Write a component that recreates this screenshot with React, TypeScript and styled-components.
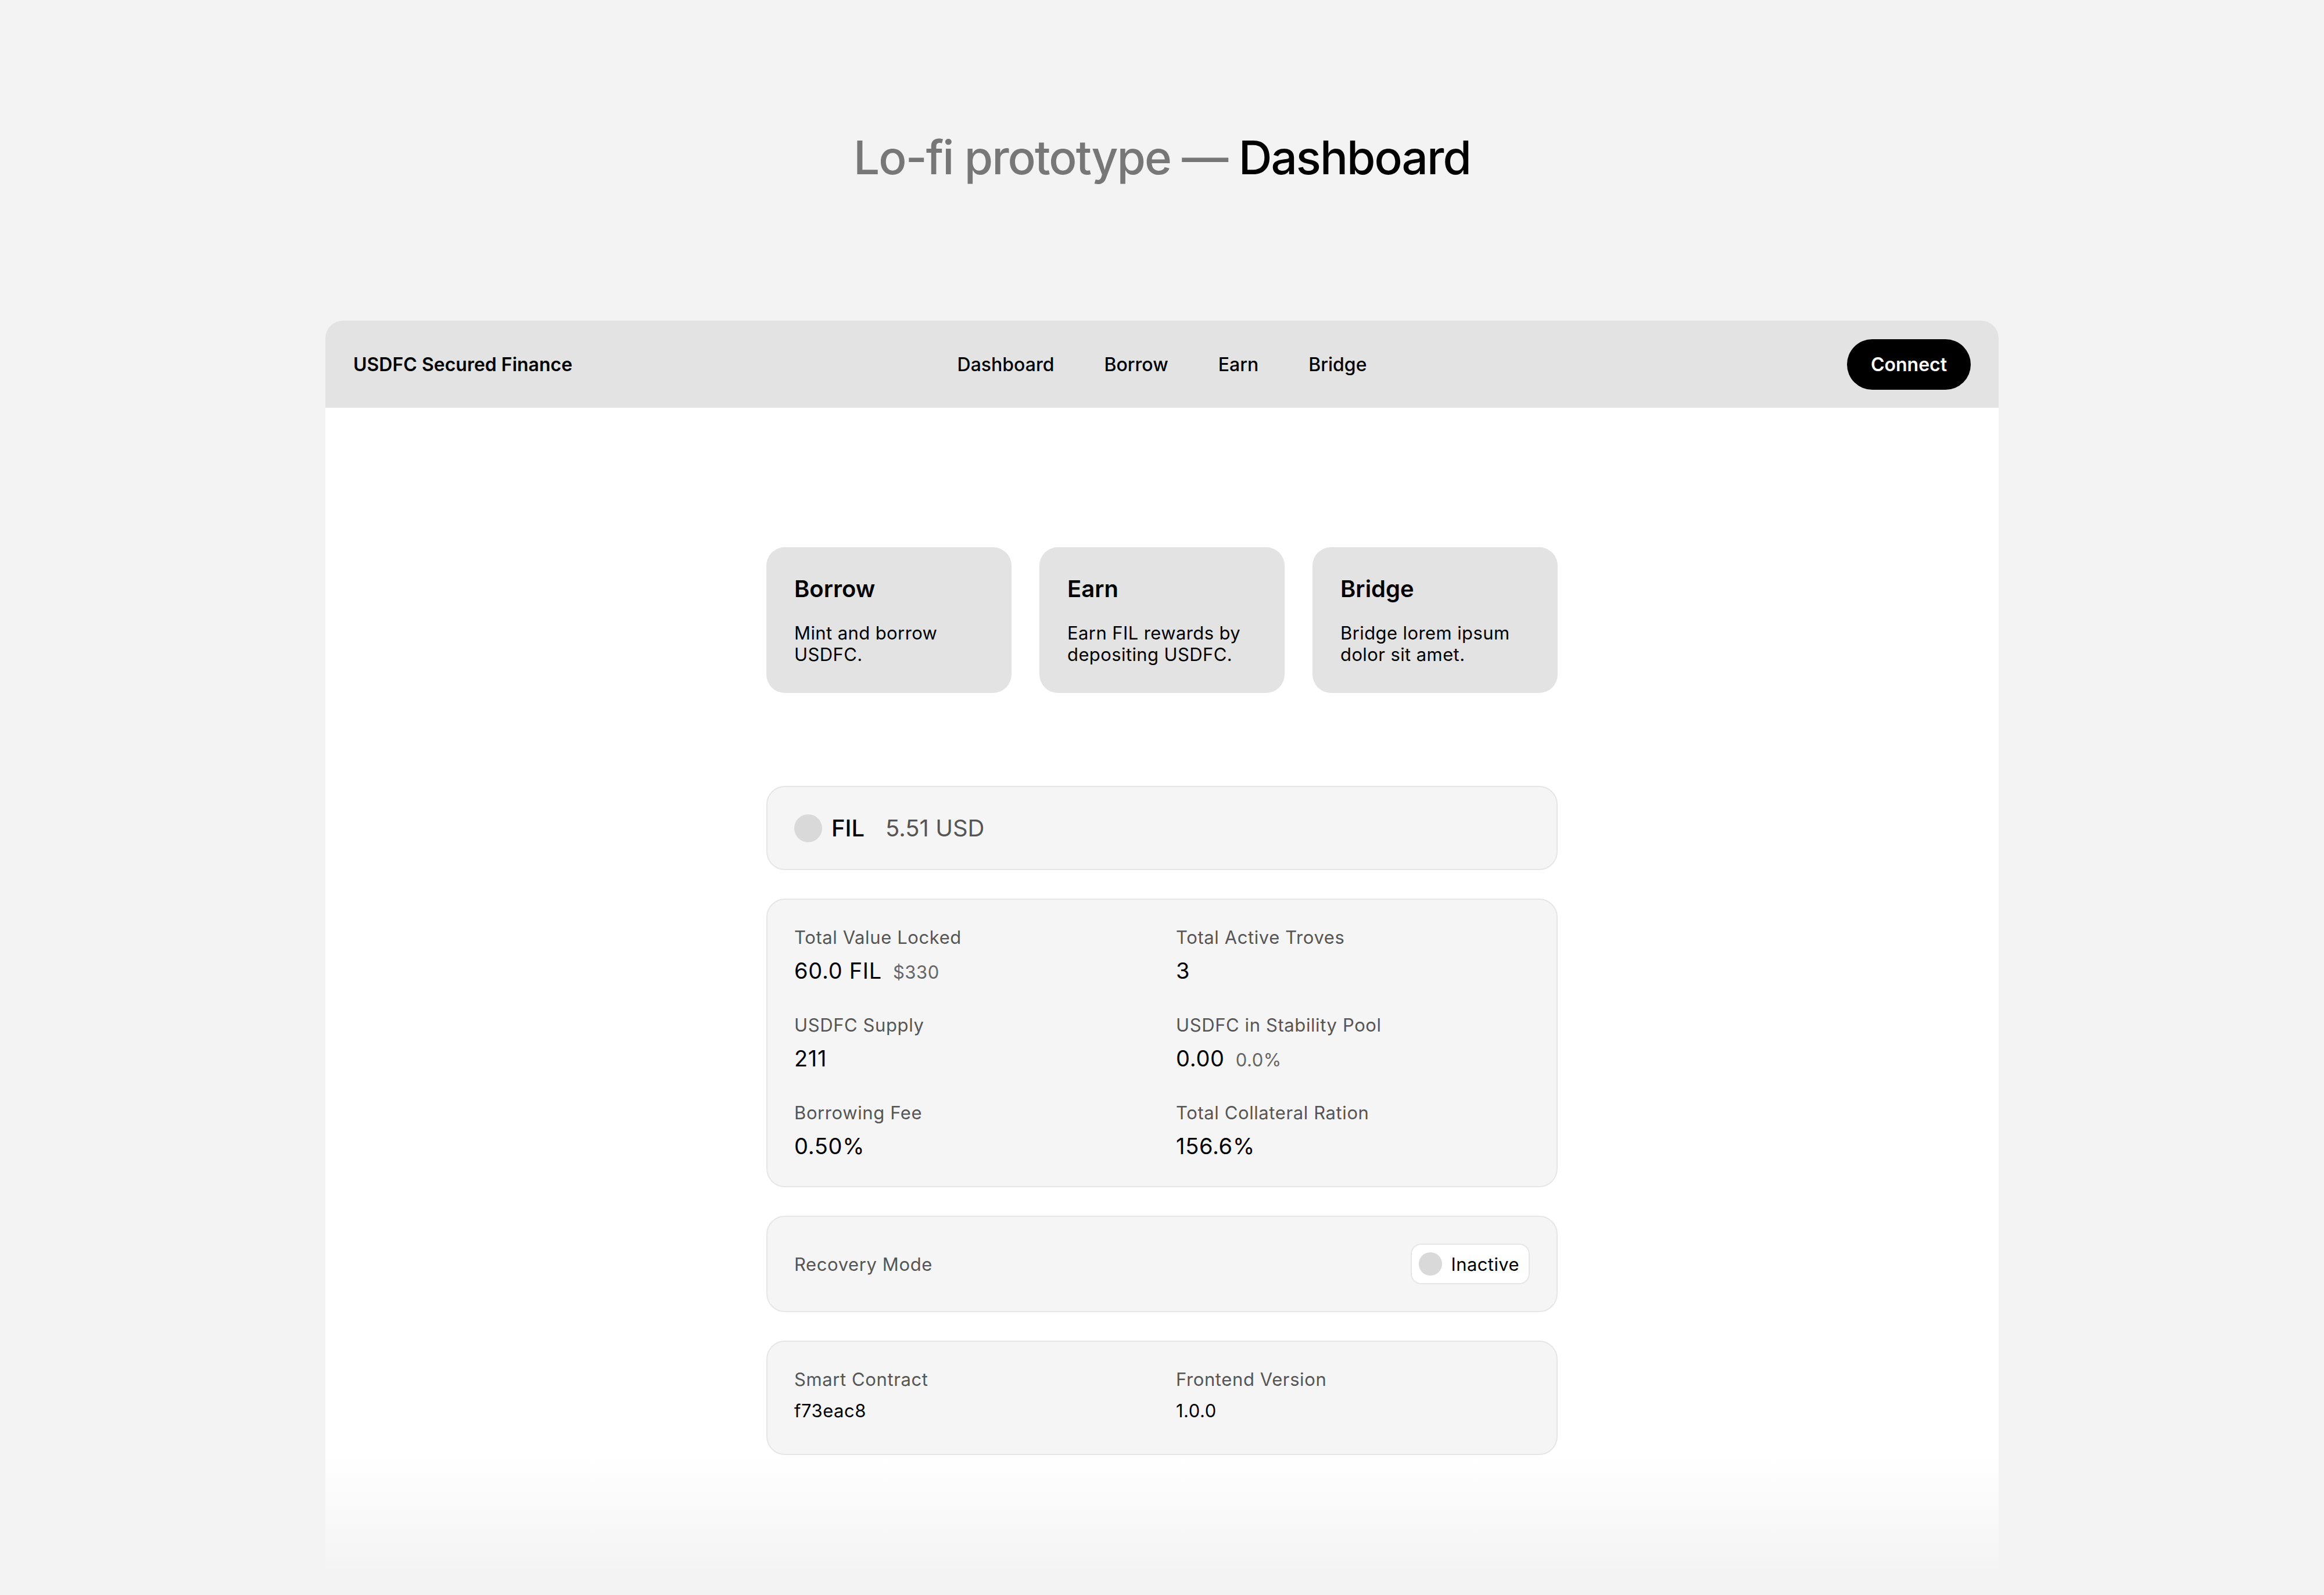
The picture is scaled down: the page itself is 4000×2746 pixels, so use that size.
import styled, { createGlobalStyle } from "styled-components"

const GlobalStyle = createGlobalStyle`
  html, body {
    margin: 0;
    padding: 0;
    background: #f3f3f3;
  }
  body {
    font-family: Inter, "Noto Sans", "Liberation Sans", sans-serif;
    color: #000;
    -webkit-font-smoothing: antialiased;
  }
`

const Page = styled.div`
  display: flex;
  flex-direction: column;
  align-items: center;
  padding-top: 223px;
  padding-bottom: 43px;
`

const Title = styled.h1`
  margin: 0;
  font-size: 80px;
  line-height: 96px;
  font-weight: 500;
  letter-spacing: -2px;
  color: #000;

  span {
    color: #777;
  }
`

const Frame = styled.div`
  margin-top: 233px;
  width: 2880px;
  border-radius: 30px 30px 0 0;
  overflow: hidden;
  background: #fff;
`

const Header = styled.header`
  height: 150px;
  padding: 0 48px;
  background: #e3e3e3;
  display: grid;
  grid-template-columns: 1fr auto 1fr;
  align-items: center;
`

const Brand = styled.div`
  font-size: 32px;
  font-weight: 600;
`

const Nav = styled.nav`
  display: flex;
  gap: 86px;
`

const NavLink = styled.a`
  font-size: 32px;
  font-weight: 500;
  color: #000;
  text-decoration: none;
  cursor: pointer;
`

const ConnectButton = styled.button`
  justify-self: end;
  height: 87px;
  width: 213px;
  border: none;
  border-radius: 44px;
  background: #000;
  color: #fff;
  font-family: inherit;
  font-size: 32px;
  font-weight: 600;
  cursor: pointer;
`

const Body = styled.main`
  padding: 240px 0 196px;
  display: flex;
  justify-content: center;
  background: linear-gradient(180deg, #fff 0, #fff calc(100% - 193px), #f4f4f4 100%);
`

const Column = styled.div`
  width: 1362px;
  display: flex;
  flex-direction: column;
  gap: 49px;
`

const ActionRow = styled.div`
  display: grid;
  grid-template-columns: repeat(3, 1fr);
  gap: 48px;
  margin-bottom: 111px;
`

const ActionCard = styled.div`
  background: #e3e3e3;
  border-radius: 32px;
  padding: 48px;
  display: flex;
  flex-direction: column;
  gap: 33px;
  cursor: pointer;
`

const ActionTitle = styled.div`
  font-size: 40px;
  line-height: 48px;
  font-weight: 600;
`

const ActionText = styled.div`
  font-size: 31px;
  line-height: 37px;
  font-weight: 400;
  letter-spacing: 0.4px;
`

const Panel = styled.section<{ $bottom?: number }>`
  background: #f5f5f5;
  border: 2px solid #e6e6e6;
  border-radius: 32px;
  padding: 46px 46px ${p => p.$bottom ?? 46}px;
`

const PriceRow = styled.div`
  display: flex;
  align-items: center;
`

const Dot = styled.span<{ $size: number }>`
  width: ${p => p.$size}px;
  height: ${p => p.$size}px;
  border-radius: 50%;
  background: #d9d9d9;
  flex-shrink: 0;
`

const Token = styled.span`
  margin-left: 16px;
  font-size: 40px;
  font-weight: 500;
`

const Price = styled.span`
  margin-left: 36px;
  font-size: 40px;
  font-weight: 400;
  color: #555;
`

const StatGrid = styled.div`
  display: grid;
  grid-template-columns: 1fr 1fr;
  column-gap: 48px;
  row-gap: 52px;
`

const Stat = styled.div`
  display: flex;
  flex-direction: column;
  gap: 16px;
`

const Label = styled.div`
  font-size: 31px;
  line-height: 37px;
  font-weight: 400;
  letter-spacing: 0.6px;
  color: #555;
`

const Value = styled.div`
  font-size: 38px;
  line-height: 46px;
  font-weight: 400;
  letter-spacing: 0.7px;
`

const SubValue = styled.span`
  margin-left: 19px;
  font-size: 31px;
  line-height: 1;
  font-weight: 400;
  letter-spacing: 0.5px;
  color: #666;
`

const ModeRow = styled.div`
  display: flex;
  align-items: center;
  justify-content: space-between;
`

const Badge = styled.div`
  display: flex;
  align-items: center;
  gap: 16px;
  padding: 13px 16px 13px 12px;
  background: #fff;
  border: 2px solid #e6e6e6;
  border-radius: 18px;
  font-size: 31px;
  line-height: 37px;
  font-weight: 400;
  letter-spacing: 0.4px;
`

const MetaGrid = styled.div`
  display: grid;
  grid-template-columns: 1fr 1fr;
  column-gap: 48px;
`

const Meta = styled.div`
  display: flex;
  flex-direction: column;
  gap: 17px;
`

const MetaValue = styled.div`
  font-size: 31px;
  line-height: 37px;
  font-weight: 400;
  letter-spacing: 0.5px;
`

const actions = [
  { title: "Borrow", text: "Mint and borrow USDFC." },
  { title: "Earn", text: "Earn FIL rewards by depositing USDFC." },
  { title: "Bridge", text: "Bridge lorem ipsum dolor sit amet." },
]

const stats = [
  { label: "Total Value Locked", value: "60.0 FIL", sub: "$330" },
  { label: "Total Active Troves", value: "3" },
  { label: "USDFC Supply", value: "211" },
  { label: "USDFC in Stability Pool", value: "0.00", sub: "0.0%" },
  { label: "Borrowing Fee", value: "0.50%" },
  { label: "Total Collateral Ration", value: "156.6%" },
]

export default function App() {
  return (
    <>
      <GlobalStyle />
      <Page>
        <Title>
          <span>Lo-fi prototype — </span>Dashboard
        </Title>

        <Frame>
          <Header>
            <Brand>USDFC Secured Finance</Brand>
            <Nav>
              <NavLink>Dashboard</NavLink>
              <NavLink>Borrow</NavLink>
              <NavLink>Earn</NavLink>
              <NavLink>Bridge</NavLink>
            </Nav>
            <ConnectButton type="button">Connect</ConnectButton>
          </Header>

          <Body>
            <Column>
              <ActionRow>
                {actions.map(a => (
                  <ActionCard key={a.title}>
                    <ActionTitle>{a.title}</ActionTitle>
                    <ActionText>{a.text}</ActionText>
                  </ActionCard>
                ))}
              </ActionRow>

              <Panel>
                <PriceRow>
                  <Dot $size={48} />
                  <Token>FIL</Token>
                  <Price>5.51 USD</Price>
                </PriceRow>
              </Panel>

              <Panel>
                <StatGrid>
                  {stats.map(s => (
                    <Stat key={s.label}>
                      <Label>{s.label}</Label>
                      <Value>
                        {s.value}
                        {s.sub && <SubValue>{s.sub}</SubValue>}
                      </Value>
                    </Stat>
                  ))}
                </StatGrid>
              </Panel>

              <Panel>
                <ModeRow>
                  <Label>Recovery Mode</Label>
                  <Badge>
                    <Dot $size={40} />
                    Inactive
                  </Badge>
                </ModeRow>
              </Panel>

              <Panel $bottom={56}>
                <MetaGrid>
                  <Meta>
                    <Label>Smart Contract</Label>
                    <MetaValue>f73eac8</MetaValue>
                  </Meta>
                  <Meta>
                    <Label>Frontend Version</Label>
                    <MetaValue>1.0.0</MetaValue>
                  </Meta>
                </MetaGrid>
              </Panel>
            </Column>
          </Body>
        </Frame>
      </Page>
    </>
  )
}
